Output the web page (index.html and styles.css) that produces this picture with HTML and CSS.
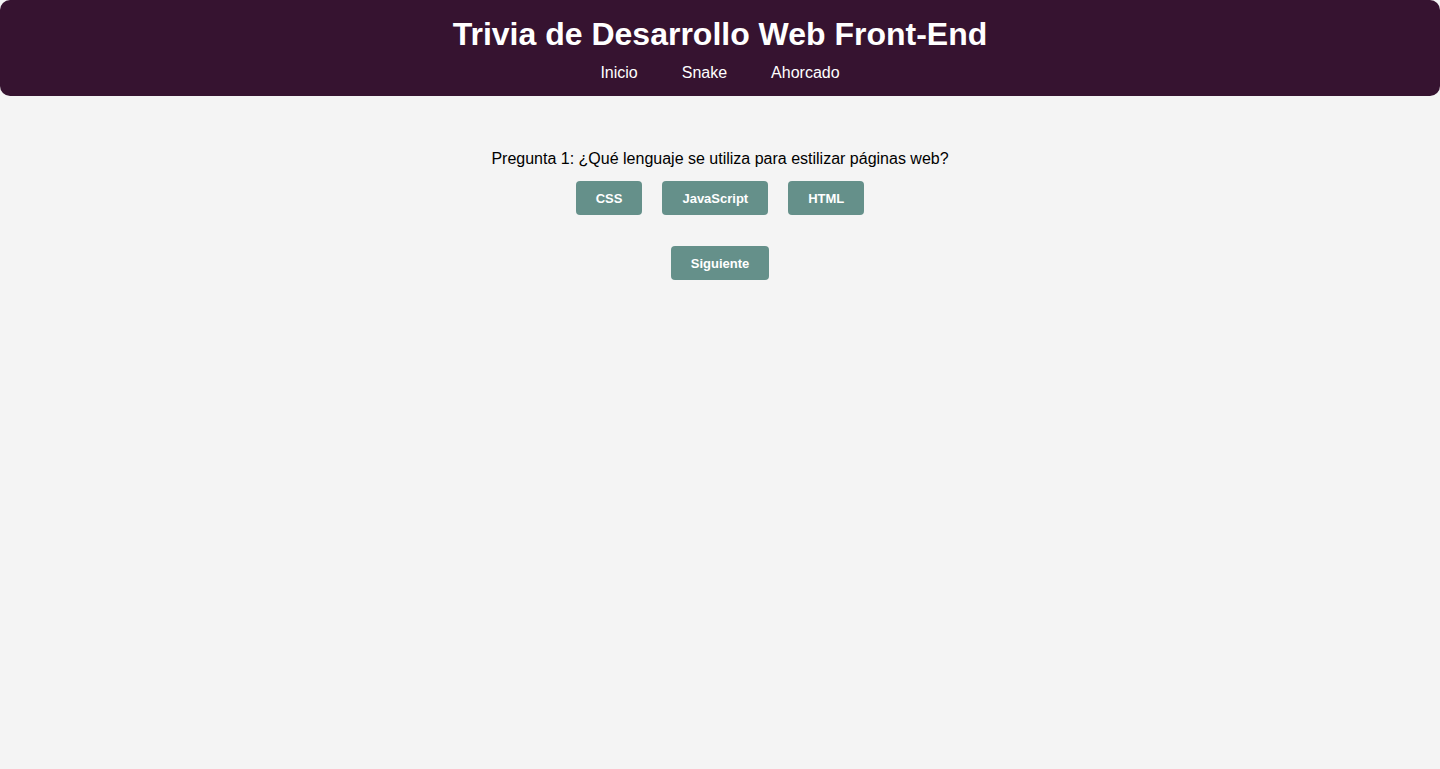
FILE: index.html
```html
<!DOCTYPE html>
<html lang="es">
<head>
<meta charset="UTF-8">
<title>Trivia de Desarrollo Web Front-End</title>
<link rel="stylesheet" href="styles.css">
</head>
<body>
<header class="site-header">
  <h1 class="site-title">Trivia de Desarrollo Web Front-End</h1>
  <nav class="site-nav">
    <a class="nav-link" href="#">Inicio</a>
    <a class="nav-link" href="#">Snake</a>
    <a class="nav-link" href="#">Ahorcado</a>
  </nav>
</header>
<main class="quiz">
  <p class="question">Pregunta 1: ¿Qué lenguaje se utiliza para estilizar páginas web?</p>
  <div class="options">
    <button class="btn">CSS</button>
    <button class="btn">JavaScript</button>
    <button class="btn">HTML</button>
  </div>
  <button class="btn btn-next">Siguiente</button>
</main>
</body>
</html>
```

FILE: styles.css
```css
html, body {
  margin: 0;
  padding: 0;
}
body {
  background: #f4f4f4;
  font-family: "Liberation Sans", Arial, sans-serif;
  color: #000;
}
.site-header {
  background: #361330;
  color: #fff;
  border-radius: 10px;
  padding: 16px 0 14px;
  text-align: center;
}
.site-title {
  margin: 0 0 11px;
  font-size: 32px;
  font-weight: bold;
}
.site-nav {
  display: flex;
  justify-content: center;
  gap: 44px;
  font-size: 16px;
}
.nav-link {
  color: #fff;
  text-decoration: none;
}
.quiz {
  display: flex;
  flex-direction: column;
  align-items: center;
  padding-top: 54px;
}
.question {
  margin: 0 0 13px;
  font-size: 16px;
}
.options {
  display: flex;
  gap: 20px;
  margin-bottom: 31px;
}
.btn {
  background: #65908a;
  color: #fff;
  border: none;
  border-radius: 4px;
  padding: 10px 20px;
  font-family: "Liberation Sans", Arial, sans-serif;
  font-size: 13px;
  font-weight: bold;
  height: 34px;
  cursor: pointer;
}
```
